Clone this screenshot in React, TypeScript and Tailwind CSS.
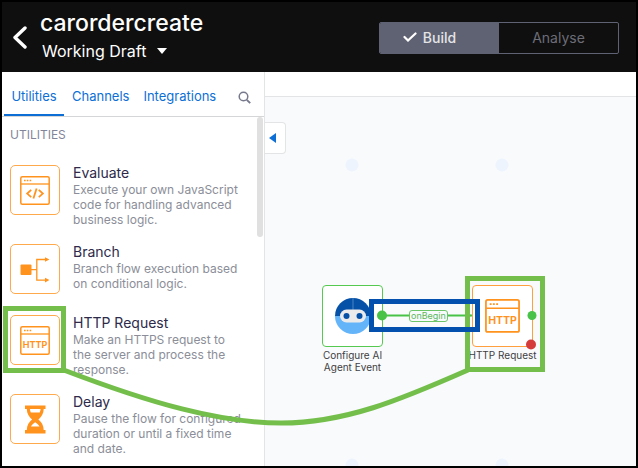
import type { ReactNode } from "react";

const ORANGE = "#ff931e";

function WindowFrame({ children }: { children: ReactNode }) {
  return (
    <svg viewBox="0 0 30 29" className="w-full" fill="none" aria-hidden="true">
      <rect x="0.8" y="0.8" width="28.4" height="27.4" rx="1.5" stroke={ORANGE} strokeWidth="1.5" />
      <path d="M1 8h28" stroke={ORANGE} strokeWidth="1.3" />
      <path d="M4 4.4h1.6M6.8 4.4h1.6M9.6 4.4h1.6" stroke={ORANGE} strokeWidth="1.5" />
      {children}
    </svg>
  );
}

function EvaluateIcon() {
  return (
    <WindowFrame>
      <path
        d="M11.2 13.8 7.2 17.6l4 3.6M18.8 13.8l4 3.8-4 3.6M16.6 12.6l-3.2 10"
        stroke={ORANGE}
        strokeWidth="1.8"
      />
    </WindowFrame>
  );
}

function HttpIcon() {
  return (
    <WindowFrame>
      <text
        x="15"
        y="21.6"
        textAnchor="middle"
        fontSize="9"
        fontWeight="700"
        fill={ORANGE}
        className="font-['Inter',sans-serif]"
      >
        HTTP
      </text>
    </WindowFrame>
  );
}

function BranchIcon() {
  return (
    <svg viewBox="0 0 30 29" className="w-full" fill="none" aria-hidden="true">
      <rect x="0.5" y="9.5" width="11" height="10.5" rx="1" fill={ORANGE} />
      <path d="M11 14.7h5.6M26 4.5h-9.2v20.6H26" stroke={ORANGE} strokeWidth="1.3" />
      <path d="M25 2.2l4.4 2.3L25 6.8zM25 22.8l4.4 2.3-4.4 2.3z" fill={ORANGE} />
    </svg>
  );
}

function DelayIcon() {
  return (
    <svg viewBox="0 0 30 29" className="w-full" aria-hidden="true">
      <path
        fillRule="evenodd"
        fill={ORANGE}
        d="M5 .5h20.500v3.600h-1.800c0 4.600-2.400 8-5.300 10.400 2.900 2.400 5.300 5.800 5.300 10.400h1.800v3.600H5v-3.600h1.800c0-4.600 2.400-8 5.300-10.400C9.200 12.100 6.800 8.700 6.800 4.100H5zM9.900 4.100c.1 1.300.4 2.400.9 3.500h8.900c.5-1.100.8-2.200.9-3.500zM15.200 17.200c-1.900 1.100-3.300 2.600-4.200 4.300h8.500c-.9-1.700-2.400-3.200-4.300-4.300z"
      />
    </svg>
  );
}

function AgentIcon() {
  return (
    <svg viewBox="0 0 36 36" className="w-9" aria-hidden="true">
      <path d="M0 18a18 18 0 0 1 36 0z" fill="#0651a8" />
      <path d="M0 18a18 18 0 0 0 36 0z" fill="#64b4fa" />
      <path d="M18 0v12" stroke="#5b8fc9" strokeWidth="0.8" />
      <rect x="5" y="11.500" width="26" height="13" rx="6.500" fill="#ebebec" />
      <circle cx="11.500" cy="18" r="3" fill="#0651a8" />
      <circle cx="24.500" cy="18" r="3" fill="#0651a8" />
    </svg>
  );
}

const items = [
  {
    title: "Evaluate",
    text: "Execute your own JavaScript code for handling advanced business logic.",
    icon: <EvaluateIcon />,
  },
  { title: "Branch", text: "Branch flow execution based on conditional logic.", icon: <BranchIcon /> },
  {
    title: "HTTP Request",
    text: "Make an HTTPS request to the server and process the response.",
    icon: <HttpIcon />,
  },
  {
    title: "Delay",
    text: "Pause the flow for configured duration or until a fixed time and date.",
    icon: <DelayIcon />,
  },
];

function Header() {
  return (
    <header className="flex h-[70px] shrink-0 items-start justify-between bg-[#0f0f0f] pr-[17px] text-white">
      <div className="flex">
        <button aria-label="Back" className="mt-6 ml-[10px] h-6 w-4">
          <svg viewBox="0 0 16 24" className="h-6 w-4" fill="none" aria-hidden="true">
            <path d="M13 2 3 11.500 13 21" stroke="#fff" strokeWidth="3.400" strokeLinecap="round" strokeLinejoin="round" />
          </svg>
        </button>
        <div className="ml-3 pt-[5px]">
          <h1 className="text-[23px] leading-8 font-medium">carordercreate</h1>
          <button className="flex items-center gap-[10px] pl-[2px] text-[16px] leading-6">
            Working Draft
            <svg viewBox="0 0 12 8" className="h-2 w-3" aria-hidden="true">
              <path d="M1 1h10L6 7z" fill="#fff" />
            </svg>
          </button>
        </div>
      </div>
      <div className="mt-5 grid h-8 w-60 grid-cols-2 overflow-hidden rounded-[2px] border border-[#5f6272] text-[14px]">
        <button className="flex items-center justify-center gap-[6px] bg-[#5f6272] pr-5 pb-[2px] font-medium text-[#e4e4e8]">
          <svg viewBox="0 0 14 10" className="h-[10px] w-[14px]" fill="none" aria-hidden="true">
            <path d="M1.500 5 5 8.500 12.500 1.500" stroke="#fff" strokeWidth="2.200" strokeLinecap="round" />
          </svg>
          Build
        </button>
        <button className="pb-[2px] text-[#6c6d77]">Analyse</button>
      </div>
    </header>
  );
}

function Sidebar() {
  return (
    <aside className="flex w-[263px] shrink-0 flex-col border-r border-[#e3e4e6] bg-white">
      <nav className="flex h-[45px] border-b border-[#d5d6d8] pl-[2px] text-[13px] text-[#0d6fd6]">
        <a href="#utilities" className="flex w-[60px] items-center justify-center border-b-2 border-[#0d6fd6] pt-2">
          Utilities
        </a>
        <a href="#channels" className="ml-2 flex items-center pt-[6px]">Channels</a>
        <a href="#integrations" className="ml-[14px] flex items-center pt-[6px]">Integrations</a>
        <button aria-label="Search" className="ml-[22px] pt-[6px]">
          <svg viewBox="0 0 13 13" className="size-[13px]" fill="none" stroke="#77798c" aria-hidden="true">
            <circle cx="5.500" cy="5.500" r="4.300" strokeWidth="1.500" />
            <path d="m8.800 8.800 3.400 3.400" strokeWidth="1.900" />
          </svg>
        </button>
      </nav>
      <div className="flex flex-1 justify-between">
        <div className="pt-[10px] pl-2">
          <h2 className="text-[12px] leading-4 text-[#82859a]">UTILITIES</h2>
          <ul className="mt-[21px] flex flex-col gap-4">
            {items.map((item) => (
              <li key={item.title} className="flex min-h-[55px] gap-[13px]">
                <div className="mt-px flex size-[50px] shrink-0 items-center justify-center rounded-[5px] border border-[#ffa94d] px-[9px]">
                  {item.icon}
                </div>
                <div className="w-[172px]">
                  <h3 className="text-[14px] leading-[18px] text-[#2d2a4a]">{item.title}</h3>
                  <p className="text-[12px] leading-[15px] text-[#8b8e98]">{item.text}</p>
                </div>
              </li>
            ))}
          </ul>
        </div>
        <div className="mr-px h-[120px] w-[6px] rounded-full bg-[#e0e0e0]" />
      </div>
    </aside>
  );
}

function Canvas() {
  return (
    <section className="relative flex-1 overflow-hidden bg-[#f9fafc]">
      <svg className="absolute inset-0 size-full" aria-hidden="true">
        <g fill="#eef4fd">
          <circle cx="87" cy="68" r="6.500" />
          <circle cx="237" cy="68" r="6.500" />
          <circle cx="87" cy="368" r="6.500" />
          <circle cx="237" cy="368" r="6.500" />
        </g>
      </svg>
      <button
        aria-label="Collapse panel"
        className="absolute top-[25px] -left-px flex h-8 w-[22px] items-center justify-center rounded-r-[4px] border border-l-0 border-[#e3e4e6] bg-white pr-1"
      >
        <svg viewBox="0 0 7 10" className="h-[10px] w-[7px]" aria-hidden="true">
          <path d="M7 0v10L0 5z" fill="#0d6fd6" />
        </svg>
      </button>

      <div className="absolute top-[188px] left-[57px] flex w-[61px] flex-col items-center">
        <div className="flex h-[62px] w-full items-center justify-center rounded-[4px] border border-[#56c950] bg-white">
          <AgentIcon />
        </div>
        <p className="mt-[2px] text-center text-[10px] leading-3 whitespace-nowrap text-[#3f3f43]">
          Configure AI
          <br />
          Agent Event
        </p>
      </div>
      <div className="absolute top-[188px] left-[207px] flex w-[61px] flex-col items-center">
        <div className="flex h-[62px] w-full items-center justify-center rounded-[4px] border border-[#ff9f3d] bg-white px-[12px]">
          <HttpIcon />
        </div>
        <p className="mt-[2px] text-[10px] leading-3 whitespace-nowrap text-[#3f3f43]">HTTP Request</p>
      </div>

      <svg className="absolute inset-0 size-full" aria-hidden="true">
        <path d="M117 218.500h90" stroke="#48c247" strokeWidth="2" />
        <path d="M200.500 214v9l6-4.500z" fill="#48c247" />
        <circle cx="117" cy="218.500" r="5" fill="#48c247" />
        <circle cx="267" cy="218.500" r="4.500" fill="#48c247" />
        <circle cx="266" cy="247.500" r="5" fill="#d63b3b" />
      </svg>
      <span className="absolute top-[213px] left-[144px] rounded-[3px] border border-[#6cc668] bg-[#f9fafc] px-px text-[9px] leading-[10px] text-[#5cb85c]">
        onBegin
      </span>
    </section>
  );
}

function Annotations() {
  return (
    <svg className="pointer-events-none absolute inset-0 size-full" fill="none" strokeWidth="5" aria-hidden="true">
      <g stroke="#74bf4b">
        <rect x="5.500" y="308.500" width="58" height="62" />
        <rect x="467.500" y="278.500" width="75" height="91" />
        <path d="M65 370.500C150 403 220 423 281 423C345 423 400 400 468 370" />
      </g>
      <rect x="371.500" y="301.500" width="106" height="28" stroke="#0450ae" />
    </svg>
  );
}

export default function App() {
  return (
    <div className="relative flex min-h-screen flex-col bg-black p-[2px] font-['Inter',sans-serif]">
      <Header />
      <main className="flex flex-1">
        <Sidebar />
        <div className="flex min-w-0 flex-1 flex-col">
          <div className="h-[25px] border-b border-[#e3e4e6] bg-white" />
          <Canvas />
        </div>
      </main>
      <Annotations />
    </div>
  );
}
